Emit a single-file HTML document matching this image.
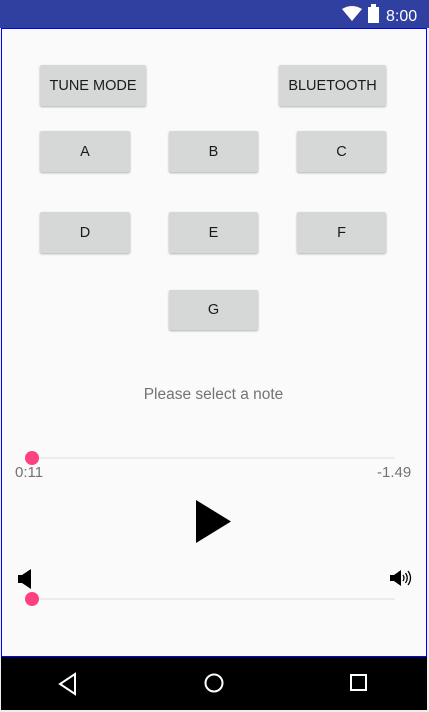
<!DOCTYPE html>
<html><head><style>
body{margin:0;width:429px;height:712px;background:#eee;position:relative;overflow:hidden;font-family:"Liberation Sans",sans-serif}
.sb{position:absolute;left:0;top:0;width:429px;height:28px;background:#3040a0}
.main{position:absolute;left:1px;top:28px;width:424px;height:627px;background:#fafafa;border:1px solid #00f}
.nav{position:absolute;left:1px;top:657px;width:426px;height:53px;background:#000}
.btn{position:absolute;background:#d6d7d7;border-radius:2px;box-shadow:0 1px 2px rgba(0,0,0,.3);font-size:14.5px;color:#1a1a1a;display:flex;align-items:center;justify-content:center}
.t{position:absolute;color:#737373;font-size:14px}
.track{position:absolute;left:32px;width:363px;height:2px;background:#ececec}
.th{position:absolute;width:14px;height:14px;border-radius:50%;background:#ff4081}
</style></head><body>
<div class="sb">
<svg style="position:absolute;left:342px;top:6px" width="20" height="16"><path d="M0 3 Q10 -3 20 3 L10 15Z" fill="#fff"/></svg>
<div style="position:absolute;left:368px;top:7px;width:11px;height:16px;background:#fff"></div>
<div style="position:absolute;left:371px;top:4px;width:5px;height:3px;background:#fff"></div>
<div style="position:absolute;left:386px;top:8px;color:#fff;font-size:16px">8:00</div>
</div>
<div class="main"></div>
<div class="btn" style="left:40px;top:65px;width:106px;height:41px">TUNE MODE</div>
<div class="btn" style="left:279px;top:65px;width:107px;height:41px">BLUETOOTH</div>
<div class="btn" style="left:40px;top:131px;width:90px;height:41px">A</div>
<div class="btn" style="left:169px;top:131px;width:89px;height:41px">B</div>
<div class="btn" style="left:297px;top:131px;width:89px;height:41px">C</div>
<div class="btn" style="left:40px;top:212px;width:90px;height:41px">D</div>
<div class="btn" style="left:169px;top:212px;width:89px;height:41px">E</div>
<div class="btn" style="left:297px;top:212px;width:89px;height:41px">F</div>
<div class="btn" style="left:169px;top:290px;width:89px;height:40px">G</div>
<div class="t" style="left:0;width:427px;text-align:center;top:386px;font-size:15.5px">Please select a note</div>
<div class="track" style="top:457px"></div>
<div class="th" style="left:25px;top:451px"></div>
<div class="t" style="left:15px;top:464px;font-size:15px">0:11</div>
<div class="t" style="left:377px;top:464px;font-size:15px">-1.49</div>
<svg style="position:absolute;left:196px;top:500px" width="36" height="44"><path d="M0 0 L35 21.5 L0 43Z" fill="#000"/></svg>
<svg style="position:absolute;left:17px;top:569px" width="16" height="20"><path d="M1 6 H5 L14 0 V20 L5 14 H1Z" fill="#000"/></svg>
<svg style="position:absolute;left:390px;top:570px" width="24" height="16"><path d="M0 5 H4 L11 0 V16 L4 11 H0Z" fill="#000"/><path d="M13 5 Q15 8 13 11 M15.5 3 Q19 8 15.5 13 M18 1 Q23 8 18 15" stroke="#000" fill="none" stroke-width="1.3"/></svg>
<div class="track" style="top:598px"></div>
<div class="th" style="left:25px;top:592px"></div>
<div class="nav">
<svg style="position:absolute;left:57px;top:15px" width="20" height="24"><path d="M17 2 V22 L2 12Z" fill="none" stroke="#fff" stroke-width="2"/></svg>
<svg style="position:absolute;left:202px;top:15px" width="22" height="22"><circle cx="11" cy="11" r="8.5" fill="none" stroke="#fff" stroke-width="2"/></svg>
<svg style="position:absolute;left:349px;top:17px" width="20" height="20"><rect x="1" y="1" width="15" height="15" fill="none" stroke="#fff" stroke-width="2"/></svg>
</div>
</body></html>
